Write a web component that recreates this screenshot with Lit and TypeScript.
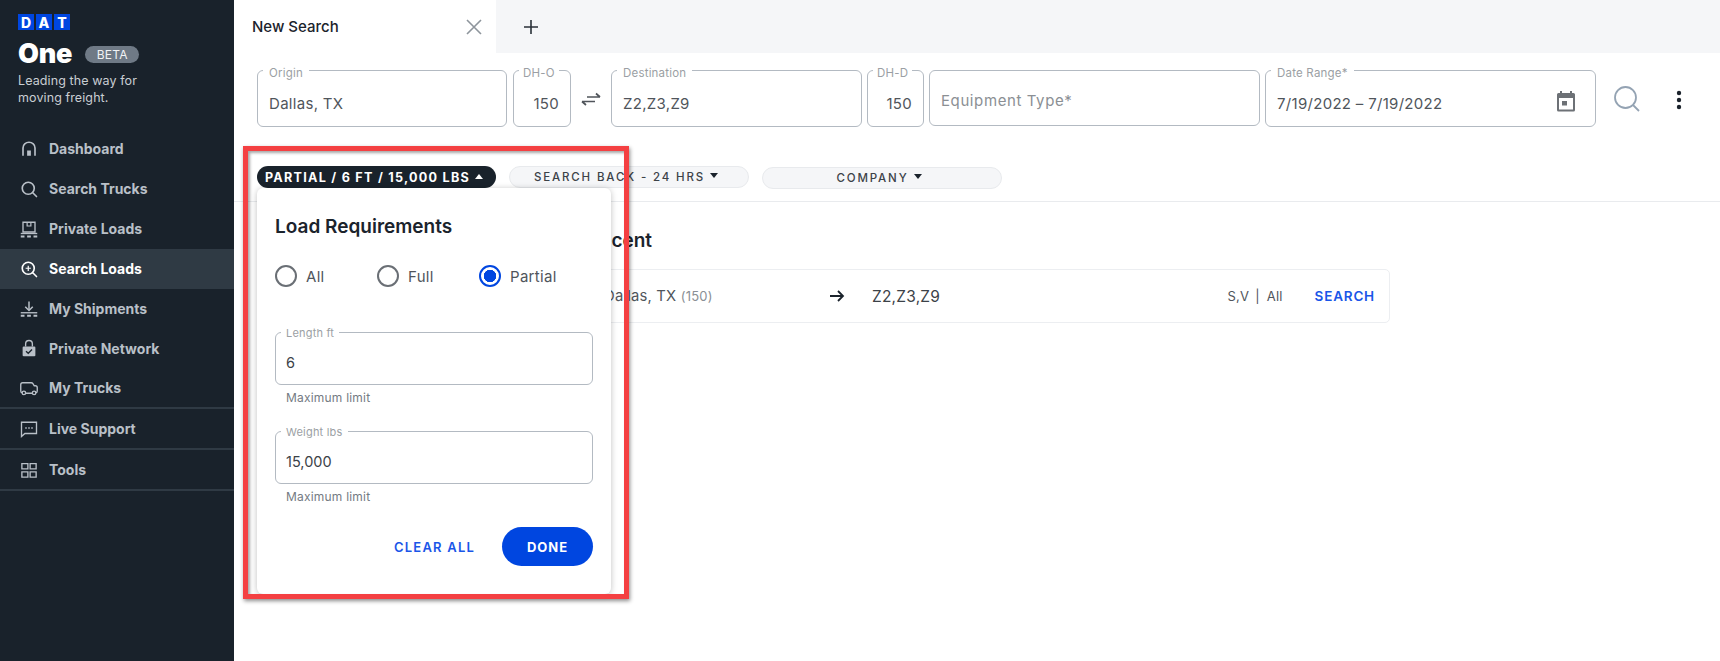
import { css, html, LitElement, svg } from 'lit'
import { customElement } from 'lit/decorators.js'

const navIcons: Record<string, unknown> = {
  home: svg`<path d="M4 21V10.500C4 6.400 7.600 3 12 3s8 3.400 8 7.500V21" fill="none" stroke="currentColor" stroke-width="2.200"/><rect x="9.500" y="14" width="5" height="7" fill="currentColor"/>`,
  search: svg`<circle cx="11" cy="11" r="8" fill="none" stroke="currentColor" stroke-width="2.200"/><path d="M17 17l5 5" stroke="currentColor" stroke-width="2.200" stroke-linecap="round"/>`,
  loads: svg`<path d="M4 16V3h16v13z" fill="none" stroke="currentColor" stroke-width="1.800"/><path d="M9.500 3v5h5V3" fill="none" stroke="currentColor" stroke-width="1.600"/><path d="M1 18h22" stroke="currentColor" stroke-width="1.800"/><path d="M1 22h5M9.500 22h5M18 22h5" stroke="currentColor" stroke-width="2.400"/>`,
  searchPlus: svg`<circle cx="11" cy="11" r="8" fill="none" stroke="currentColor" stroke-width="2.200"/><path d="M17 17l5 5" stroke="currentColor" stroke-width="2.200" stroke-linecap="round"/><path d="M11 7.500v7M7.500 11h7" stroke="currentColor" stroke-width="1.600"/>`,
  shipments: svg`<path d="M12 2v11" stroke="currentColor" stroke-width="2"/><path d="M7 9l5 5 5-5" fill="none" stroke="currentColor" stroke-width="2"/><path d="M1 17h22" stroke="currentColor" stroke-width="1.800"/><path d="M1 21h5M9.500 21h5M18 21h5" stroke="currentColor" stroke-width="2.600"/>`,
  lock: svg`<path d="M7.500 10V6.500a4.500 4.500 0 0 1 9 0V10" fill="none" stroke="currentColor" stroke-width="1.800"/><rect x="3.500" y="10" width="17" height="13" rx="1.500" fill="currentColor"/><path d="M8 16.300l3 2.800 5-5.200" fill="none" stroke="#19222b" stroke-width="1.800"/>`,
  truck: svg`<path d="M3 18.500c-1.300-.3-2-1.200-2-2.500V7.500C1 6 2 5 3.500 5H15c1 0 1.700.4 2.200 1.200L19 9h1.500C22 9 23 10 23 11.500V16c0 1.400-.8 2.300-2 2.500M7.500 19h9" fill="none" stroke="currentColor" stroke-width="1.800"/><circle cx="5.200" cy="18.500" r="2.300" fill="none" stroke="currentColor" stroke-width="1.800"/><circle cx="18.800" cy="18.500" r="2.300" fill="none" stroke="currentColor" stroke-width="1.800"/>`,
  chat: svg`<path d="M2 3h20v15H6.500L2 22z" fill="none" stroke="currentColor" stroke-width="1.800"/><path d="M7 10.500h2M11 10.500h2M15 10.500h2" stroke="currentColor" stroke-width="2"/>`,
  tools: svg`<path d="M2.500 3.500h8v7h-8zM13.500 3.500h8v7h-8zM2.500 14.500h8v7h-8zM13.500 14.500h8v7h-8z" fill="none" stroke="currentColor" stroke-width="1.800"/>`,
}

interface NavItem {
  label: string
  icon: string
  active?: boolean
  rule?: boolean
}

const navItems: NavItem[] = [
  { label: 'Dashboard', icon: 'home' },
  { label: 'Search Trucks', icon: 'search' },
  { label: 'Private Loads', icon: 'loads' },
  { label: 'Search Loads', icon: 'searchPlus', active: true },
  { label: 'My Shipments', icon: 'shipments' },
  { label: 'Private Network', icon: 'lock' },
  { label: 'My Trucks', icon: 'truck', rule: true },
  { label: 'Live Support', icon: 'chat', rule: true },
  { label: 'Tools', icon: 'tools', rule: true },
]

@customElement('app-root')
export class AppRoot extends LitElement {
  static styles = css`
    :host {
      display: flex;
      position: relative;
      width: 100%;
      height: 100vh;
      overflow: hidden;
      background: #fff;
      color: #1b232c;
      font-family: Inter, 'Liberation Sans', sans-serif;
    }

    * {
      box-sizing: border-box;
    }

    .sidebar {
      flex: 0 0 234px;
      background: #19222b;
      color: #b9c0c8;
    }

    .brand {
      height: 129px;
      padding: 14px 0 0 18px;
    }

    .dat {
      display: flex;
      gap: 2px;
    }

    .dat span {
      display: flex;
      align-items: center;
      justify-content: center;
      width: 16px;
      height: 16px;
      background: #0046e0;
      color: #fff;
      font-size: 14px;
      font-weight: 800;
    }

    .one-row {
      display: flex;
      align-items: center;
      gap: 13px;
      height: 28px;
      margin-top: 9px;
    }

    .one {
      color: #fff;
      font-size: 27px;
      font-weight: 900;
      letter-spacing: -0.2px;
    }

    .beta {
      display: flex;
      align-items: center;
      justify-content: center;
      width: 54px;
      height: 17px;
      margin-top: 3px;
      border-radius: 9px;
      background: #6f7a86;
      color: #f1f3f5;
      font-size: 12px;
      letter-spacing: 0.2px;
    }

    .tagline {
      margin-top: 5px;
      color: #c9ced3;
      font-size: 12.5px;
      line-height: 17px;
      letter-spacing: 0.1px;
    }

    .nav-item {
      display: flex;
      align-items: center;
      gap: 11px;
      height: 39.9px;
      padding-left: 20px;
      font-size: 14px;
      font-weight: 700;
    }

    .nav-item svg {
      flex: none;
      width: 18px;
      height: 18px;
    }

    .nav-item.active {
      background: #2f3a44;
      color: #fff;
    }

    .nav-item.rule {
      height: 41px;
      border-bottom: 2px solid #2f3a44;
    }

    .main {
      flex: 1;
      min-width: 0;
    }

    .tabs {
      display: flex;
      height: 53px;
      background: #f5f6f8;
    }

    .tab {
      display: flex;
      align-items: center;
      justify-content: space-between;
      width: 262px;
      padding: 0 13px 0 18px;
      background: #fff;
      font-size: 15px;
      font-weight: 500;
    }

    .tab svg {
      width: 18px;
      height: 18px;
    }

    .add {
      display: flex;
      align-items: center;
      padding-left: 27px;
    }

    .add svg {
      width: 16px;
      height: 16px;
    }

    .search-row {
      display: flex;
      align-items: flex-start;
      padding: 17px 0 0 23px;
    }

    .field {
      position: relative;
      flex: none;
      height: 57px;
      padding: 0 11px;
      border: 1.5px solid #b3bac2;
      border-radius: 6px;
      background: #fff;
    }

    .field label {
      position: absolute;
      top: -4.5px;
      left: 5px;
      padding: 0 6px;
      background: #fff;
      color: #9b9fa4;
      font-size: 11.5px;
      line-height: 13px;
      letter-spacing: 0.2px;
      white-space: nowrap;
    }

    .value {
      padding-top: 23px;
      color: #50555b;
      font-size: 15px;
      line-height: 20px;
      letter-spacing: 0.3px;
      white-space: nowrap;
    }

    .num {
      text-align: right;
    }

    .num label {
      left: 5px;
      padding: 0 4px;
    }

    .field.num {
      padding: 0 11px 0 0;
    }

    .placeholder {
      padding-top: 20px;
      color: #8b8f94;
      letter-spacing: 0.6px;
    }

    .swap {
      flex: none;
      display: flex;
      justify-content: center;
      width: 40px;
      padding-top: 19px;
    }

    .swap svg {
      width: 20px;
      height: 20px;
    }

    .date {
      display: flex;
      justify-content: space-between;
    }

    .date svg {
      width: 24px;
      height: 24px;
      margin: 18px 6px 0 0;
    }

    .run {
      width: 28px;
      height: 28px;
      margin: 15px 0 0 17px;
    }

    .more {
      width: 24px;
      height: 24px;
      margin: 18px 0 0 26px;
    }

    .filters {
      display: flex;
      gap: 13px;
      height: 75px;
      padding: 39px 0 0 23px;
      border-bottom: 1px solid #e9ebee;
    }

    .chip-wrap {
      position: relative;
    }

    .chip {
      display: flex;
      align-items: center;
      justify-content: center;
      gap: 5px;
      width: 240px;
      height: 22px;
      padding-right: 6px;
      border: 1px solid #e8eaed;
      border-radius: 11px;
      background: #f5f6f8;
      color: #3c4248;
      font-size: 11.5px;
      font-weight: 500;
      letter-spacing: 1.85px;
    }

    .chip.low {
      margin-top: 1px;
    }

    .chip.on {
      width: 239px;
      padding-right: 5px;
      border: 0;
      background: #19222b;
      color: #fff;
      font-size: 12.6px;
      font-weight: 700;
      letter-spacing: 1.26px;
    }

    .caret {
      width: 0;
      height: 0;
      border-left: 4.5px solid transparent;
      border-right: 4.5px solid transparent;
      border-top: 5px solid #1b232c;
      margin-top: -3px;
    }

    .on .caret {
      border-top: 0;
      border-bottom: 5px solid #fff;
      margin-top: -1px;
    }

    .popover {
      position: absolute;
      top: 22px;
      left: 0;
      z-index: 2;
      width: 354px;
      height: 406px;
      padding: 27px 18px 0;
      border-radius: 6px;
      background: #fff;
      box-shadow: 0 1px 6px rgb(0 0 0 / 25%);
    }

    .popover h2 {
      margin: 0;
      font-size: 19px;
      font-weight: 600;
      line-height: 24px;
    }

    .radios {
      display: flex;
      margin-top: 25px;
      margin-bottom: 44px;
    }

    .radio {
      display: flex;
      align-items: center;
      gap: 9px;
      width: 102px;
      height: 24px;
      color: #50555b;
      font-size: 15px;
      letter-spacing: 0.3px;
    }

    .dot {
      flex: none;
      width: 22px;
      height: 22px;
      border: 2px solid #6a6f75;
      border-radius: 50%;
    }

    .radio.checked .dot {
      border-color: #0046e0;
      background: radial-gradient(circle, #0046e0 0 6px, #fff 6.5px);
    }

    .popover .field {
      width: 318px;
      height: 53px;
      padding: 0 10px;
    }

    .popover .field label {
      top: -6px;
      padding: 0 5px;
      font-size: 11px;
    }

    .popover .value {
      padding-top: 20px;
      color: #3c4248;
      font-size: 14.5px;
      letter-spacing: 0;
    }

    .hint {
      margin: 5px 0 26px 11px;
      color: #747b83;
      font-size: 12px;
      line-height: 15px;
      letter-spacing: 0.2px;
    }

    .hint.last {
      margin-bottom: 23px;
    }

    .actions {
      display: flex;
      align-items: center;
      justify-content: flex-end;
      gap: 27px;
    }

    .clear {
      color: #1a56e8;
      font-size: 13px;
      font-weight: 600;
      letter-spacing: 1.2px;
    }

    .done {
      display: flex;
      align-items: center;
      justify-content: center;
      width: 91px;
      height: 39px;
      border-radius: 20px;
      background: #0046e0;
      color: #fff;
      font-size: 13px;
      font-weight: 700;
      letter-spacing: 1px;
    }

    .recent {
      margin-left: 336px;
      padding-top: 27px;
      width: 820px;
    }

    .recent h3 {
      margin: 0 0 16px 18px;
      font-size: 19px;
      font-weight: 600;
      line-height: 24px;
    }

    .row {
      display: flex;
      align-items: center;
      height: 54px;
      padding-left: 33px;
      border: 1px solid #eceef1;
      border-radius: 5px;
      color: #50555b;
      font-size: 14.8px;
      letter-spacing: 0.2px;
    }

    .row .from {
      width: 225px;
    }

    .row small {
      color: #8a8f95;
      font-size: 13px;
    }

    .row svg {
      width: 16px;
      height: 16px;
      margin-right: 27px;
    }

    .row .to {
      flex: 1;
      color: #3c4248;
      font-size: 15.5px;
    }

    .meta {
      font-size: 13px;
    }

    .meta i {
      font-style: normal;
      margin: 0 7px 0 6px;
      color: #50555b;
    }

    .go {
      margin: 0 14px 0 32px;
      color: #1a56e8;
      font-size: 13.5px;
      font-weight: 600;
      letter-spacing: 0.8px;
    }

    .callout {
      position: absolute;
      top: 146px;
      left: 243px;
      z-index: 3;
      width: 386px;
      height: 453px;
      border: 5px solid #f44042;
      box-shadow: 1px 2px 4px rgb(0 0 0 / 45%), inset 2px 2px 3px rgb(0 0 0 / 35%);
      pointer-events: none;
    }

    .w-origin {
      width: 250px;
    }

    .w-dho {
      width: 58px;
      margin-left: 6px;
    }

    .w-dest {
      width: 251px;
    }

    .w-dhd {
      width: 57px;
      margin-left: 5px;
    }

    .w-equip {
      width: 331px;
      height: 56px;
      margin-left: 5px;
    }

    .w-date {
      width: 331px;
      margin-left: 5px;
    }
  `

  private renderNav(item: NavItem) {
    const classes = `nav-item${item.active ? ' active' : ''}${item.rule ? ' rule' : ''}`
    return html`<div class=${classes}>
      <svg viewBox="0 0 24 24">${navIcons[item.icon]}</svg>
      <span>${item.label}</span>
    </div>`
  }

  render() {
    return html`
      <aside class="sidebar">
        <div class="brand">
          <div class="dat"><span>D</span><span>A</span><span>T</span></div>
          <div class="one-row">
            <span class="one">One</span>
            <span class="beta">BETA</span>
          </div>
          <div class="tagline">Leading the way for<br />moving freight.</div>
        </div>
        ${navItems.map((item) => this.renderNav(item))}
      </aside>

      <main class="main">
        <div class="tabs">
          <div class="tab">
            <span>New Search</span>
            <svg viewBox="0 0 18 18"><path d="M2 2l14 14M16 2L2 16" stroke="#8e959c" stroke-width="1.6" /></svg>
          </div>
          <div class="add">
            <svg viewBox="0 0 16 16"><path d="M8 1v14M1 8h14" stroke="#2a3138" stroke-width="1.6" /></svg>
          </div>
        </div>

        <div class="search-row">
          <div class="field w-origin"><label>Origin</label><div class="value">Dallas, TX</div></div>
          <div class="field num w-dho"><label>DH-O</label><div class="value">150</div></div>
          <div class="swap">
            <svg viewBox="0 0 20 20">
              <path d="M6 8h13M15 4.500L19 8" fill="none" stroke="#50555b" stroke-width="1.700" />
              <path d="M14 12.500H1M5 16l-4-3.500" fill="none" stroke="#50555b" stroke-width="1.700" />
            </svg>
          </div>
          <div class="field w-dest"><label>Destination</label><div class="value">Z2,Z3,Z9</div></div>
          <div class="field num w-dhd"><label>DH-D</label><div class="value">150</div></div>
          <div class="field w-equip"><div class="value placeholder">Equipment Type*</div></div>
          <div class="field date w-date">
            <label>Date Range*</label>
            <div class="value">7/19/2022 – 7/19/2022</div>
            <svg viewBox="0 0 24 24">
              <path d="M7 2v3M17 2v3" stroke="#6d7176" stroke-width="2" />
              <path d="M3 5.500a1.500 1.500 0 0 1 1.500-1.500h15a1.500 1.500 0 0 1 1.500 1.500V21a1.500 1.500 0 0 1-1.500 1.500h-15A1.500 1.500 0 0 1 3 21z" fill="#6d7176" />
              <rect x="5" y="9" width="14" height="11.500" fill="#fff" />
              <rect x="8" y="12" width="5" height="4.500" fill="#6d7176" />
            </svg>
          </div>
          <svg class="run" viewBox="0 0 28 28">
            <circle cx="12.500" cy="12.500" r="10.500" fill="none" stroke="#94a3b3" stroke-width="1.800" />
            <path d="M20 20l6 6" stroke="#94a3b3" stroke-width="1.800" />
          </svg>
          <svg class="more" viewBox="0 0 24 24">
            <circle cx="12" cy="5" r="2.200" fill="#1b232c" />
            <circle cx="12" cy="12" r="2.200" fill="#1b232c" />
            <circle cx="12" cy="19" r="2.200" fill="#1b232c" />
          </svg>
        </div>

        <div class="filters">
          <div class="chip-wrap">
            <div class="chip on">PARTIAL / 6 FT / 15,000 LBS<span class="caret"></span></div>
            <div class="popover">
              <h2>Load Requirements</h2>
              <div class="radios">
                <div class="radio"><span class="dot"></span>All</div>
                <div class="radio"><span class="dot"></span>Full</div>
                <div class="radio checked"><span class="dot"></span>Partial</div>
              </div>
              <div class="field"><label>Length ft</label><div class="value">6</div></div>
              <div class="hint">Maximum limit</div>
              <div class="field"><label>Weight lbs</label><div class="value">15,000</div></div>
              <div class="hint last">Maximum limit</div>
              <div class="actions">
                <span class="clear">CLEAR ALL</span>
                <span class="done">DONE</span>
              </div>
            </div>
          </div>
          <div class="chip">SEARCH BACK - 24 HRS<span class="caret"></span></div>
          <div class="chip low">COMPANY<span class="caret"></span></div>
        </div>

        <section class="recent">
          <h3>Recent</h3>
          <div class="row">
            <span class="from">Dallas, TX <small>(150)</small></span>
            <svg viewBox="0 0 16 16"><path d="M1 8h13M9 3l5 5-5 5" fill="none" stroke="#1b232c" stroke-width="1.800" /></svg>
            <span class="to">Z2,Z3,Z9</span>
            <span class="meta">S,V<i>|</i>All</span>
            <span class="go">SEARCH</span>
          </div>
        </section>
      </main>

      <div class="callout"></div>
    `
  }
}
